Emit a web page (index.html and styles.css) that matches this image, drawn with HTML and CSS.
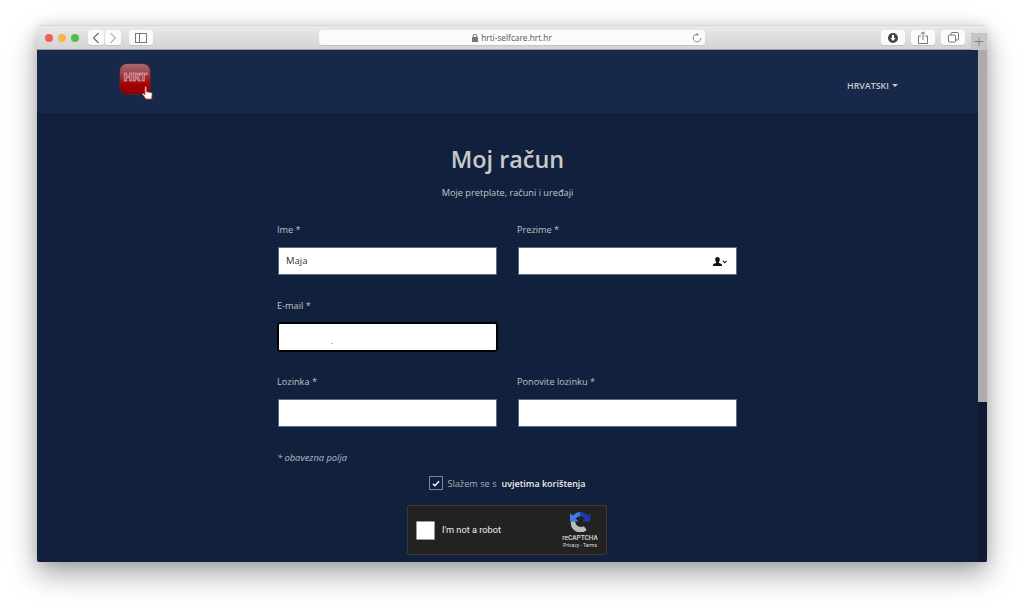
FILE: index.html
```html
<!DOCTYPE html>
<html lang="hr">
<head>
<meta charset="utf-8">
<title>Moj račun</title>
<link rel="stylesheet" href="styles.css">
</head>
<body>
<div class="window">
  <div class="titlebar">
    <div class="lights"><span class="light red"></span><span class="light yellow"></span><span class="light green"></span></div>
    <div class="navbtns">
      <span class="tbtn nb"><svg width="8" height="12" viewBox="0 0 8 12"><path d="M6.5 1 1.500 6l5 5" fill="none" stroke="#666" stroke-width="1.100"/></svg></span>
      <span class="tbtn nb"><svg width="8" height="12" viewBox="0 0 8 12"><path d="M1.500 1l5 5-5 5" fill="none" stroke="#b5b5b5" stroke-width="1.100"/></svg></span>
    </div>
    <span class="tbtn sidebar"><svg width="12" height="10" viewBox="0 0 12 10"><rect x=".5" y=".5" width="11" height="9" fill="none" stroke="#777"/><path d="M4.500 .5v9" stroke="#777"/></svg></span>
    <div class="urlbar">
      <svg class="lock" width="6" height="8" viewBox="0 0 6 8"><rect x="0" y="3" width="6" height="5" rx=".6" fill="#777"/><path d="M1.200 3.500V2a1.800 1.800 0 0 1 3.600 0v1.500" fill="none" stroke="#777"/></svg>
      <span>hrti-selfcare.hrt.hr</span>
      <svg class="reload" width="10" height="10" viewBox="0 0 10 10"><path d="M5.800 1.400A3.800 3.800 0 1 0 8.800 5" fill="none" stroke="#777" stroke-width=".9"/><path d="M4.600 0l2.200 1.400-2 1.500z" fill="#777"/></svg>
    </div>
    <div class="tools">
      <span class="tbtn tool"><svg width="10" height="10" viewBox="0 0 10 10"><circle cx="5" cy="5" r="5" fill="#444"/><path d="M4 2h2v3h1.600L5 8 2.400 5H4z" fill="#fff"/></svg></span>
      <span class="tbtn tool"><svg width="10" height="13" viewBox="0 0 10 13"><path d="M3 5H.5v7.500h9V5H7" fill="none" stroke="#777"/><path d="M5 9V1M3 2.800 5 .8l2 2" fill="none" stroke="#777"/></svg></span>
      <span class="tbtn tool"><svg width="11" height="11" viewBox="0 0 11 11"><rect x=".5" y="3" width="7" height="7" rx="1" fill="#fff" stroke="#777"/><path d="M3 3V1.500a1 1 0 0 1 1-1h5.500a1 1 0 0 1 1 1V7a1 1 0 0 1-1 1H7.500" fill="none" stroke="#777"/></svg></span>
    </div>
    <span class="newtab">+</span>
  </div>
  <div class="viewport">
    <div class="page">
      <header class="topnav">
        <a class="logo">
          <span class="logo-mark">HRT</span>
          <svg class="logo-hand" width="11" height="14" viewBox="0 0 11 14"><path d="M3 1.200c0-.8 1.500-.8 1.500 0v4.500l4.300.9c1 .2 1.400.8 1.300 1.700L9.600 13H4L.6 8.600c-.5-.8.500-1.500 1.200-.9L3 8.800z" fill="#fff" stroke="#d8392c" stroke-width=".8"/></svg>
        </a>
        <span class="lang">HRVATSKI <i class="caret"></i></span>
      </header>
      <main class="content">
        <h1>Moj račun</h1>
        <p class="sub">Moje pretplate, računi i uređaji</p>
        <form class="form">
          <div class="field"><label>Ime *</label><div class="input">Maja</div></div>
          <div class="field"><label>Prezime *</label><div class="input icon-input">
            <svg width="14" height="9" viewBox="0 0 14 9"><path d="M4.500 0C6 0 6.800 1 6.800 2.500 6.800 3.800 6 5 5.700 5.500c0 .8 3.300 1.200 3.300 2.300V9H0V7.800c0-1.100 3.300-1.500 3.300-2.300C3 5 2.200 3.800 2.200 2.500 2.200 1 3 0 4.500 0z" fill="#111"/><path d="M10 4l1.800 1.800L13.600 4" fill="none" stroke="#222" stroke-width="1.100"/></svg>
          </div></div>
          <div class="field"><label>E-mail *</label><div class="input focused"><span class="speck"></span></div></div>
          <div class="field empty"></div>
          <div class="field"><label>Lozinka *</label><div class="input"></div></div>
          <div class="field"><label>Ponovite lozinku *</label><div class="input"></div></div>
        </form>
        <p class="note">* obavezna polja</p>
        <div class="agree">
          <span class="check"><svg width="8" height="7" viewBox="0 0 9 8"><path d="M1 4.200 3.300 6.500 8 1.500" fill="none" stroke="#fff" stroke-width="1.600"/></svg></span>
          <span>Slažem se s</span><strong>uvjetima korištenja</strong>
        </div>
        <div class="captcha">
          <span class="cbox"></span>
          <span class="robot">I'm not a robot</span>
          <div class="brand">
            <svg width="21" height="21" viewBox="0 0 22 22">
              <path d="M11 1a10 10 0 0 0-8 4L0 2v9h9L6 8a6 6 0 0 1 5-2.500z" fill="#3f7de8"/>
              <path d="M11 1a10 10 0 0 1 8 4l2.500-3v9h-9l3-3A6 6 0 0 0 11 5.500z" fill="#1c3aa9"/>
              <path d="M1 11h4.500a6 6 0 0 0 9 5l3 4A10 10 0 0 1 1 11z" fill="#bdbdbd"/>
            </svg>
            <span class="re">reCAPTCHA</span>
            <span class="pt">Privacy - Terms</span>
          </div>
        </div>
      </main>
    </div>
    <div class="scroll"><div class="thumb"></div></div>
  </div>
</div>
</body>
</html>
```
FILE: styles.css
```css
* { box-sizing: border-box; }
html, body { margin: 0; height: 100%; background: #fff; overflow: hidden; }
body { padding: 25px 37px 0; font-family: "Open Sans", sans-serif; }

.window {
  width: 950px; height: 537px;
  display: flex; flex-direction: column;
  border-radius: 5px 5px 2px 2px;
  box-shadow: 0 12px 28px rgba(0,0,0,.36), 0 0 12px rgba(0,0,0,.1);
  overflow: hidden;
}

.titlebar {
  height: 25px; flex: none; position: relative;
  display: flex; align-items: center;
  padding: 0 0 0 8px;
  background: linear-gradient(#e9e9e9, #d3d3d3);
  border-bottom: 1px solid #9d9d9d;
  border-top: 1px solid #d9d9d9;
}
.lights { display: flex; gap: 5px; }
.light { width: 8px; height: 8px; border-radius: 50%; }
.red { background: #f25d55; }
.yellow { background: #f8b73f; }
.green { background: #52bd4a; }

.tbtn {
  display: flex; align-items: center; justify-content: center;
  height: 15px; background: #fbfbfb; border-radius: 3px;
  box-shadow: 0 1px 0 #c4c4c4;
}
.navbtns { display: flex; gap: 1px; margin-left: 9px; }
.nb { width: 16px; }
.sidebar { width: 24px; margin-left: 8px; }
.urlbar {
  width: 386px; height: 15px; margin-left: 166px;
  position: relative;
  display: flex; align-items: center; justify-content: center; gap: 3px;
  background: #fbfbfb; border-radius: 3px; box-shadow: 0 1px 0 #c4c4c4;
  font-size: 8.300px; color: #555;
}
.reload { position: absolute; right: 3px; top: 3px; }
.tools { display: flex; gap: 6px; margin-left: 176px; }
.tool { width: 24px; }
.newtab {
  position: absolute; right: 0; top: 7px;
  width: 16px; height: 17px;
  background: #c6c6c6; color: #7d7d7d;
  font-size: 18px; font-weight: 300; line-height: 17px; text-align: center;
}

.viewport { flex: 1; display: flex; min-height: 0; background: #11203c; }
.page { flex: 1; min-width: 0; }
.scroll { width: 9px; flex: none; background: #0f1b34; }
.thumb { height: 352px; background: #adabab; }

.topnav {
  height: 63px;
  display: flex; align-items: center; justify-content: space-between;
  padding: 0 80px 0 82px;
  background: #17294a;
}
.logo { position: relative; display: block; width: 32px; height: 32px; margin-top: -5px; }
.logo-mark {
  display: block; width: 32px; height: 32px; border-radius: 8px;
  background: linear-gradient(#a86a70 0%, #a33a42 35%, #a50000 70%, #8c0000 100%);
  border: 1px solid #3d2a3a;
  color: #a5484e; -webkit-text-stroke: .5px #eed9d9;
  font-size: 11px; font-weight: 800; text-align: center; line-height: 27px;
  font-family: "DejaVu Sans", sans-serif; letter-spacing: -.6px;
}
.logo-hand { position: absolute; right: -2px; bottom: -5px; }
.lang { font-size: 8.900px; font-weight: 600; color: #c6c9d0; display: flex; align-items: center; gap: 3px; margin-top: 7px; }
.caret { width: 0; height: 0; border: 3px solid transparent; border-top-color: #c6c9d0; border-bottom: 0; }

.content { width: 461px; margin: 0 auto; padding-top: 30px; }
h1 { margin: 0; font-size: 23.400px; line-height: 33px; font-weight: 600; color: #c9c9cb; text-align: center; }
.sub { margin: 9px 0 0; font-size: 9.200px; line-height: 15px; color: #c4c5c9; text-align: center; }

.form { display: grid; grid-template-columns: 220px 220px; column-gap: 20px; row-gap: 20px; margin-top: 22px; }
.field label { display: block; font-size: 9.200px; line-height: 15px; color: #c0c1c6; }
.field { height: 56px; }
.input {
  margin: 10px 0 0 1px; height: 28px;
  background: #fff; border: 1px solid #5f6b84;
  font-size: 9.500px; color: #333; line-height: 26px; padding-left: 7px;
  display: flex; align-items: center;
}
.icon-input { justify-content: flex-end; padding-right: 9px; }
.focused { outline: 1px solid #000; border-color: #000; border-radius: 2px; padding-left: 52px; padding-top: 12px; }
.speck { width: 2px; height: 1px; background: #bbb; }

.note { margin: 21px 0 0; font-size: 9.300px; line-height: 14px; font-style: italic; color: #b9bbc1; }

.agree {
  display: flex; align-items: center; justify-content: center;
  margin-top: 11px; height: 14px; font-size: 9.200px; color: #a9abb2;
}
.check {
  width: 14px; height: 14px; margin-right: 4px;
  border: 1px solid #7d8699;
  display: flex; align-items: center; justify-content: center;
}
.agree strong { font-weight: 600; color: #eceef1; margin-left: 5px; font-size: 9px; }

.captcha {
  width: 200px; height: 50px; margin: 15px 0 0 130px;
  display: flex; align-items: center;
  background: #222; border: 1px solid #3a3a3a; border-radius: 2px;
  padding: 0 7px 0 8px;
}
.cbox { width: 19px; height: 19px; background: #fff; border: 1px solid #9a9a9a; border-radius: 1px; }
.robot { margin: 0 0 2px 7px; font-size: 9.200px; color: #eee; font-family: "Roboto", sans-serif; }
.brand {
  margin-left: auto; width: 38px;
  display: flex; flex-direction: column; align-items: center;
  font-family: "Roboto", sans-serif; color: #ddd;
}
.re { font-size: 6.500px; line-height: 8px; margin-top: 2px; font-weight: 500; }
.pt { font-size: 5px; line-height: 7px; white-space: nowrap; }
```
